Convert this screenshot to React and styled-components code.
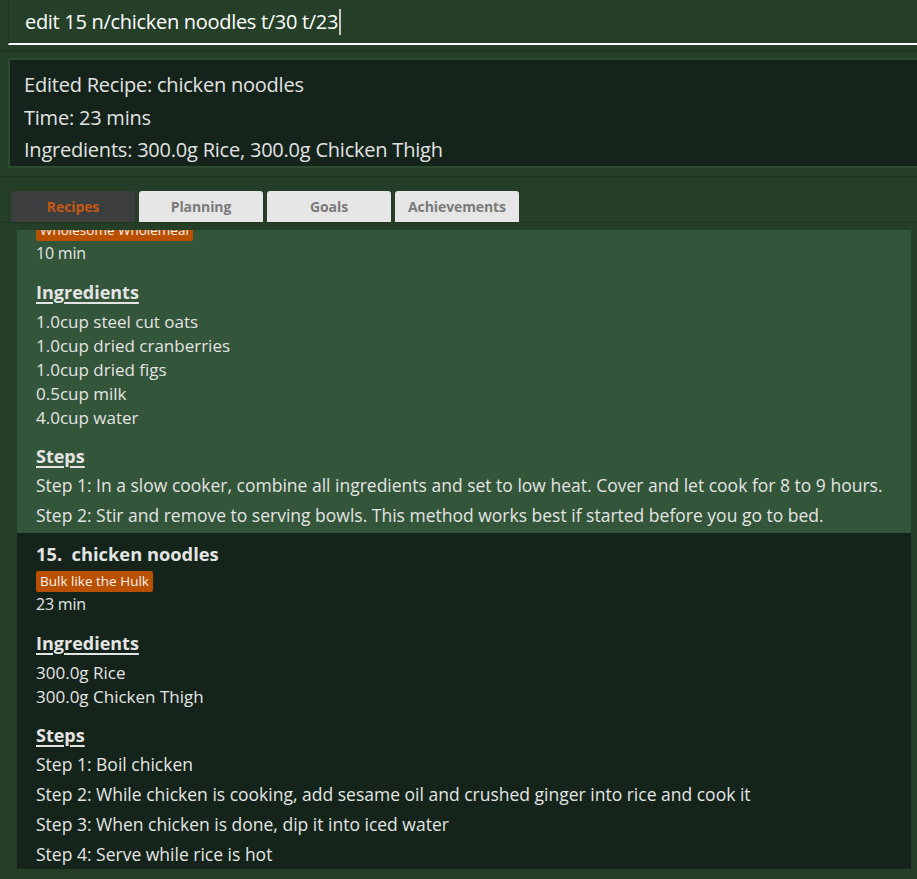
import React from "react";
import styled, { createGlobalStyle } from "styled-components";

const Global = createGlobalStyle`
  html, body { margin: 0; padding: 0; background: #253e27; }
  body { font-family: "Open Sans", "Noto Sans", sans-serif; overflow: hidden; }
  * { box-sizing: border-box; }
`;

const Page = styled.div`
  width: 917px;
  height: 879px;
  background: #253e27;
  display: flex;
  flex-direction: column;
  overflow: hidden;
`;

const CommandBar = styled.div`
  padding-left: 8px;
  height: 52px;
  border-bottom: 2px solid #203622;
`;

const CommandInput = styled.div`
  height: 45px;
  background: #263f28;
  border-left: 1px solid #1f3521;
  border-bottom: 2px solid #ffffff;
  display: flex;
  align-items: center;
  padding-left: 16px;
  color: #ffffff;
  font-size: 20px;
  letter-spacing: -0.3px;
  white-space: pre;
`;

const Caret = styled.span`
  display: inline-block;
  width: 2px;
  height: 26px;
  margin-left: 1px;
  background: #c8c8c8;
`;

const ResultWrap = styled.div`
  padding: 6px 0 8px 8px;
  border-bottom: 2px solid #203622;
`;

const ResultBox = styled.div`
  height: 110px;
  background: #14241a;
  border: 2px solid #2c4a30;
  border-right: none;
  padding: 9px 0 0 14px;
  color: #e2e2e2;
  font-size: 20px;
  line-height: 32.5px;
  letter-spacing: -0.22px;
`;

const TabArea = styled.div`
  flex: 1;
  display: flex;
  flex-direction: column;
  padding-top: 13px;
  min-height: 0;
`;

const TabBar = styled.div`
  display: flex;
  gap: 4px;
  padding-left: 11px;
  height: 32px;
  border-bottom: 1px solid #1d341f;
`;

const Tab = styled.div`
  width: 124px;
  height: 31px;
  border-radius: 3px 3px 0 0;
  background: ${(p) => (p.$active ? "#3d3e40" : "#e6e6e6")};
  color: ${(p) => (p.$active ? "#c75a11" : "#7a7a7a")};
  font-weight: 700;
  font-size: 14px;
  display: flex;
  align-items: center;
  justify-content: center;
  letter-spacing: -0.1px;
`;

const ContentFrame = styled.div`
  flex: 1;
  min-height: 0;
  padding: 7px 6px 10px 17px;
  display: flex;
`;

const ListViewport = styled.div`
  flex: 1;
  overflow: hidden;
`;

const List = styled.div`
  margin-top: -10px;
  display: flex;
  flex-direction: column;
`;

const Card = styled.div`
  background: ${(p) => (p.$selected ? "#33553a" : "#14241a")};
  padding: ${(p) => p.$pad};
  color: #e4e4e4;
  font-size: 17px;
`;

const Title = styled.div`
  font-size: 18.3px;
  font-weight: 700;
  line-height: 24px;
  white-space: pre;
  margin-bottom: 5px;
`;

const TagRow = styled.div`
  display: flex;
  height: 21px;
`;

const Tag = styled.span`
  display: inline-block;
  background: #b95000;
  color: #f4f4f4;
  font-size: 13.5px;
  line-height: 21px;
  padding: 0 4px;
  border-radius: 2px;
`;

const Duration = styled.div`
  font-size: 16px;
  line-height: 24px;
  letter-spacing: -0.2px;
`;

const Heading = styled.div`
  margin-top: ${(p) => p.$mt}px;
  font-size: 18px;
  font-weight: 700;
  line-height: 24px;
  text-decoration: underline;
  text-underline-offset: 3px;
  text-decoration-thickness: 1.5px;
`;

const IngList = styled.div`
  margin-top: 6px;
`;

const Ingredient = styled.div`
  line-height: 24px;
`;

const StepList = styled.div`
  margin-top: 2px;
`;

const Step = styled.div`
  font-size: 17.5px;
  line-height: 30px;
  white-space: nowrap;
`;

const recipes = [
  {
    selected: true,
    pad: "0 0 3px 19px",
    title: null,
    tag: "Wholesome Wholemeal",
    time: "10 min",
    ingredients: [
      "1.0cup steel cut oats",
      "1.0cup dried cranberries",
      "1.0cup dried figs",
      "0.5cup milk",
      "4.0cup water",
    ],
    steps: [
      "Step 1: In a slow cooker, combine all ingredients and set to low heat. Cover and let cook for 8 to 9 hours.",
      "Step 2: Stir and remove to serving bowls. This method works best if started before you go to bed.",
    ],
  },
  {
    selected: false,
    pad: "9px 0 3px 19px",
    title: "15.  chicken noodles",
    tag: "Bulk like the Hulk",
    time: "23 min",
    ingredients: ["300.0g Rice", "300.0g Chicken Thigh"],
    steps: [
      "Step 1: Boil chicken",
      "Step 2: While chicken is cooking, add sesame oil and crushed ginger into rice and cook it",
      "Step 3: When chicken is done, dip it into iced water",
      "Step 4: Serve while rice is hot",
    ],
  },
];

function RecipeCard({ r }) {
  return (
    <Card $selected={r.selected} $pad={r.pad}>
      {r.title && <Title>{r.title}</Title>}
      <TagRow>
        <Tag>{r.tag}</Tag>
      </TagRow>
      <Duration>{r.time}</Duration>
      <Heading $mt={15}>Ingredients</Heading>
      <IngList>
        {r.ingredients.map((i) => (
          <Ingredient key={i}>{i}</Ingredient>
        ))}
      </IngList>
      <Heading $mt={14}>Steps</Heading>
      <StepList>
        {r.steps.map((s) => (
          <Step key={s}>{s}</Step>
        ))}
      </StepList>
    </Card>
  );
}

export default function App() {
  return (
    <Page>
      <Global />
      <CommandBar>
        <CommandInput>
          edit 15 n/chicken noodles t/30 t/23
          <Caret />
        </CommandInput>
      </CommandBar>
      <ResultWrap>
        <ResultBox>
          <div>Edited Recipe: chicken noodles</div>
          <div>Time: 23 mins</div>
          <div>Ingredients: 300.0g Rice, 300.0g Chicken Thigh</div>
        </ResultBox>
      </ResultWrap>
      <TabArea>
        <TabBar>
          <Tab $active>Recipes</Tab>
          <Tab>Planning</Tab>
          <Tab>Goals</Tab>
          <Tab>Achievements</Tab>
        </TabBar>
        <ContentFrame>
          <ListViewport>
            <List>
              {recipes.map((r, i) => (
                <RecipeCard key={i} r={r} />
              ))}
            </List>
          </ListViewport>
        </ContentFrame>
      </TabArea>
    </Page>
  );
}
